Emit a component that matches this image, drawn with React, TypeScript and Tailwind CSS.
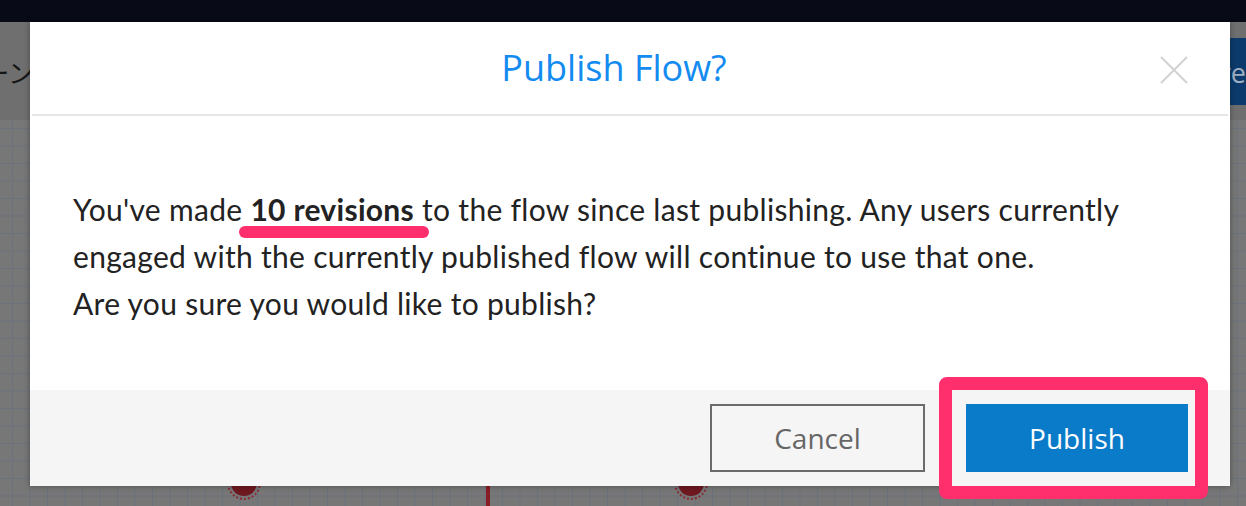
import React from "react";

const Backdrop: React.FC = () => (
  <div className="flex h-full w-full flex-col">
    <div className="h-[22px] w-full bg-[#080b17]" />
    <div className="relative flex h-[98px] items-center justify-between bg-[#6f6f6f] shadow-[0_2px_3px_rgba(0,0,0,0.35)]">
      <div className="flex w-[34px] justify-end overflow-hidden">
        <span className="whitespace-nowrap font-['Noto_Sans_CJK_JP',sans-serif] text-[26px] text-[#161616]">
          ターン
        </span>
      </div>
      <div className="flex h-[67px] w-[96px] items-center justify-end bg-[#0c3a6c] pt-[4px]">
        <span className="font-['Open_Sans',sans-serif] text-[27px] text-[#9fb0c2]">
          Save
        </span>
      </div>
    </div>
    <div className="relative flex-1 bg-[#777777] bg-[linear-gradient(to_right,#6b727c_1px,transparent_1px),linear-gradient(to_bottom,#6b727c_1px,transparent_1px)] bg-[size:17.5px_17.5px] bg-[position:12px_8px]">
      <div className="absolute left-[227px] top-[346px] h-[34px] w-[34px] rounded-full border-2 border-dotted border-[#8c2b34] p-[2px]">
        <div className="h-full w-full rounded-full bg-[#6e1820]" />
      </div>
      <div className="absolute left-[486px] top-[350px] h-[40px] w-[4px] bg-[#8a1c25]" />
      <div className="absolute left-[674px] top-[346px] h-[34px] w-[34px] rounded-full border-2 border-dotted border-[#8c2b34] p-[2px]">
        <div className="h-full w-full rounded-full bg-[#6e1820]" />
      </div>
    </div>
  </div>
);

const PublishModal: React.FC = () => (
  <div className="absolute left-[30px] top-[22px] z-20 flex h-[464px] w-[1200px] flex-col bg-white shadow-[0_0_6px_rgba(0,0,0,0.35)]">
    <div className="relative flex h-[92px] items-center justify-center pr-[32px]">
      <h1 className="font-['Open_Sans',sans-serif] text-[36px] font-normal text-[#148bf0]">
        Publish Flow?
      </h1>
      <button className="absolute right-[42px] top-[34px] h-[28px] w-[28px]" aria-label="Close">
        <svg viewBox="0 0 28 28" className="h-full w-full" fill="none" stroke="#d2d2d2" strokeWidth="2">
          <path d="M1 1 L27 27 M27 1 L1 27" />
        </svg>
      </button>
    </div>
    <div className="mx-[2px] h-[2px] bg-[#e6e6e6]" />
    <div className="flex-1 pl-[43px] pt-[70px]">
      <p className="whitespace-nowrap font-['Lato',sans-serif] text-[30px] leading-[47px] tracking-[0.3px] text-[#222222]">
        You've made{" "}
        <span className="relative font-bold">
          10 revisions
          <span className="absolute left-[-11px] right-[-15px] top-[35px] h-[12px] rounded-full bg-[#ff2f6e]" />
        </span>{" "}
        to the flow since last publishing. Any users currently
        <br />
        engaged with the currently published flow will continue to use that one.
        <br />
        Are you sure you would like to publish?
      </p>
    </div>
    <div className="flex h-[96px] items-center justify-end gap-[41px] bg-[#f5f5f5] pr-[42px]">
      <button className="flex h-[68px] w-[215px] items-center justify-center border-2 border-[#6b6b6b] bg-[#f5f5f5] font-['Open_Sans',sans-serif] text-[28px] text-[#666666]">
        Cancel
      </button>
      <button className="flex h-[68px] w-[222px] items-center justify-center bg-[#0a7bc8] font-['Open_Sans',sans-serif] text-[28px] text-white">
        Publish
      </button>
    </div>
  </div>
);

export default function App() {
  return (
    <div className="relative h-[506px] w-full overflow-hidden">
      <Backdrop />
      <PublishModal />
      <div className="absolute left-[939px] top-[377px] z-30 h-[122px] w-[269px] rounded-[8px] border-[13px] border-[#ff2f6e]" />
    </div>
  );
}
